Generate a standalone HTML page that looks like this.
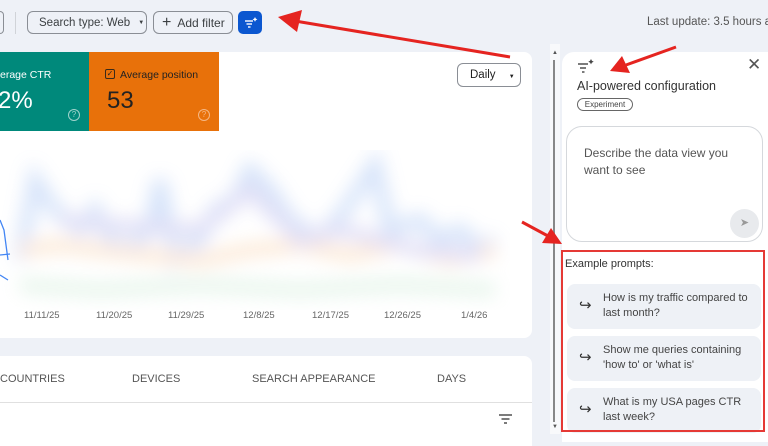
<!DOCTYPE html>
<html><head><style>
*{box-sizing:border-box;margin:0;padding:0}
body{width:768px;height:434px;overflow:hidden;background:#eef1f7;font-family:"Liberation Sans",sans-serif;position:relative;color:#1f1f1f}
.abs{position:absolute;white-space:nowrap}
.chip{position:absolute;top:11px;height:23px;border:1px solid #8a8e95;border-radius:6px;font-size:12px;color:#3c4043;display:flex;align-items:center;white-space:nowrap}
.card{position:absolute;background:#fff;border-radius:8px}
.prompt{position:absolute;left:567px;width:194px;height:45px;background:#eef1f6;border-radius:8px;font-size:11px;color:#444;line-height:15px}
.prompt span{position:absolute;left:36px;top:7px;width:150px}
.prompt i{position:absolute;left:12px;top:14px;font-style:normal;font-size:15px;color:#333}
.tab{position:absolute;top:373px;font-size:11px;color:#555}
.d{position:absolute;top:310px;font-size:9.5px;color:#666}
</style></head><body>
<div class="abs" style="left:0;top:11px;width:4px;height:23px;border:1px solid #8a8e95;border-left:none;border-radius:0 6px 6px 0"></div>
<div class="abs" style="left:15px;top:12px;width:1px;height:22px;background:#d0d3d8"></div>
<div class="chip" style="left:27px;width:120px;padding-left:11px;font-size:11.5px">Search type: Web <span style="margin-left:8px;font-size:6px">▼</span></div>
<div class="chip" style="left:153px;width:80px;padding-left:8px"><span style="font-size:16px;margin-right:6px">+</span>Add filter</div>
<div class="abs" style="left:238px;top:11px;width:24px;height:23px;background:#0b57d0;border-radius:5px">
<svg width="24" height="23"><g stroke="#fff" stroke-width="1.4"><line x1="7" y1="10" x2="15" y2="10"/><line x1="8.5" y1="13" x2="14" y2="13"/><line x1="10" y1="16" x2="12.5" y2="16"/></g><path d="M17 6l.8 1.6 1.6.8-1.6.8-.8 1.6-.8-1.6-1.6-.8 1.6-.8z" fill="#fff"/></svg></div>
<div class="abs" style="left:647px;top:16px;font-size:11.5px;color:#555">Last update: 3.5 hours ag</div>

<div class="card" style="left:-8px;top:52px;width:540px;height:286px;border-radius:0 8px 8px 0"></div>
<div class="abs" style="left:0;top:52px;width:89px;height:79px;background:#00897b;color:#fff">
<div class="abs" style="left:0;top:17px;font-size:10.5px">erage CTR</div>
<div class="abs" style="left:-2px;top:35px;font-size:24px">2%</div>
<div class="abs" style="left:68px;top:57px;width:12px;height:12px;border:1px solid #9fd3cc;border-radius:50%;font-size:8px;text-align:center;color:#9fd3cc;line-height:10px">?</div></div>
<div class="abs" style="left:89px;top:52px;width:130px;height:79px;background:#e8710a;color:#222">
<div class="abs" style="left:16px;top:17px;width:10px;height:10px;border:1.3px solid #3a2a1a;border-radius:2px;font-size:8px;line-height:8px;text-align:center">✓</div>
<div class="abs" style="left:31px;top:17px;font-size:10.5px">Average position</div>
<div class="abs" style="left:18px;top:35px;font-size:24px">53</div>
<div class="abs" style="left:109px;top:57px;width:12px;height:12px;border:1px solid #f5b784;border-radius:50%;font-size:8px;text-align:center;color:#f5b784;line-height:10px">?</div></div>
<div class="abs" style="left:457px;top:63px;width:64px;height:24px;border:1px solid #8a8e95;border-radius:6px;font-size:11.5px;padding:5px 0 0 12px">Daily <span style="font-size:6px;margin-left:10px">▼</span></div>
<svg class="abs" style="left:0;top:150px" width="510" height="160"><defs><filter id="b" x="-20%" y="-50%" width="140%" height="200%"><feGaussianBlur stdDeviation="9"/></filter></defs>
<g filter="url(#b)" fill="none" stroke-width="14" opacity=".35">
<path d="M20 110 L35 30 L55 60 L80 80 L95 60 L110 90 L130 100 L150 80 L160 30 L175 110 L200 90 L215 60 L235 50 L250 20 L270 40 L290 70 L320 90 L345 60 L375 15 L390 80 L420 70 L440 90 L460 80 L480 100 L495 90" stroke="#8ab0f0"/>
<path d="M20 100 L60 95 L100 100 L150 105 L200 110 L250 100 L300 95 L350 105 L400 95 L450 110 L495 100" stroke="#f6c28e"/>
<path d="M20 135 L100 140 L200 135 L300 140 L400 135 L495 140" stroke="#b9e2c6"/>
<path d="M60 70 L110 75 L200 80 L250 40 L300 90 L340 80 L420 100 L480 105" stroke="#a9a6e6"/></g>
<path d="M0 70 L4 80 L8 110 M0 105 L10 104 M0 125 L8 130" stroke="#4285f4" stroke-width="1.3" fill="none"/></svg>
<div class="d" style="left:24px">11/11/25</div><div class="d" style="left:96px">11/20/25</div><div class="d" style="left:168px">11/29/25</div><div class="d" style="left:243px">12/8/25</div><div class="d" style="left:312px">12/17/25</div><div class="d" style="left:384px">12/26/25</div><div class="d" style="left:461px">1/4/26</div>

<div class="card" style="left:-8px;top:356px;width:540px;height:90px;border-radius:0 8px 0 0"></div>
<div class="abs" style="left:0;top:402px;width:532px;height:1px;background:#e0e0e0"></div>
<div class="tab" style="left:0">COUNTRIES</div><div class="tab" style="left:132px">DEVICES</div><div class="tab" style="left:252px">SEARCH APPEARANCE</div><div class="tab" style="left:437px">DAYS</div>
<svg class="abs" style="left:498px;top:413px" width="16" height="12"><g stroke="#444" stroke-width="1.4"><line x1="1" y1="2" x2="14" y2="2"/><line x1="3.5" y1="6" x2="11.5" y2="6"/><line x1="6" y1="10" x2="9" y2="10"/></g></svg>

<div class="abs" style="left:550px;top:44px;width:10px;height:390px;background:#f8f9fb"></div>
<div class="abs" style="left:552px;top:50px;font-size:6px;color:#555">▲</div>
<div class="abs" style="left:553px;top:60px;width:2px;height:362px;background:#888"></div>
<div class="abs" style="left:552px;top:424px;font-size:6px;color:#555">▼</div>
<div class="card" style="left:562px;top:52px;width:210px;height:390px;border-radius:12px 0 0 0"></div>
<svg class="abs" style="left:577px;top:58px" width="20" height="16"><g stroke="#444" stroke-width="1.4"><line x1="1" y1="6" x2="11" y2="6"/><line x1="3" y1="10" x2="9" y2="10"/><line x1="5" y1="14" x2="7.5" y2="14"/></g><path d="M14 1l.9 1.8 1.8.9-1.8.9-.9 1.8-.9-1.8-1.8-.9 1.8-.9z" fill="#444"/></svg>
<div class="abs" style="left:747px;top:55px;font-size:17px;color:#555">✕</div>
<div class="abs" style="left:577px;top:79px;font-size:12.5px;color:#333">AI-powered configuration</div>
<div class="abs" style="left:577px;top:98px;width:56px;height:13px;border:1px solid #666;border-radius:7px;font-size:8px;text-align:center;line-height:11px;color:#444">Experiment</div>
<div class="abs" style="left:566px;top:126px;width:197px;height:116px;border:1px solid #d5d8dc;border-radius:16px;font-size:12px;color:#555;line-height:17px;padding:18px 0 0 17px">Describe the data view you<br>want to see
<div class="abs" style="left:163px;top:82px;width:29px;height:29px;border-radius:50%;background:#e8eaed;color:#999;font-size:11px;text-align:center;line-height:29px">➤</div></div>
<div class="abs" style="left:565px;top:258px;font-size:11px;color:#333">Example prompts:</div>
<div class="prompt" style="top:284px"><i>↪</i><span>How is my traffic compared to last month?</span></div>
<div class="prompt" style="top:336px"><i>↪</i><span>Show me queries containing 'how to' or 'what is'</span></div>
<div class="prompt" style="top:388px"><i>↪</i><span>What is my USA pages CTR last week?</span></div>
<div class="abs" style="left:561px;top:250px;width:204px;height:182px;border:2px solid #e53935"></div>

<svg class="abs" style="left:0;top:0" width="768" height="434"><g fill="#e52420" stroke="#e52420">
<line x1="510" y1="57" x2="295" y2="21" stroke-width="3"/><polygon points="278,17 302,10 297,32" stroke="none"/>
<line x1="676" y1="47" x2="626" y2="65" stroke-width="3"/><polygon points="610,71 622,56 630,73" stroke="none"/>
<line x1="522" y1="222" x2="548" y2="236" stroke-width="3"/><polygon points="562,244 542,243 551,228" stroke="none"/></g></svg>
</body></html>
